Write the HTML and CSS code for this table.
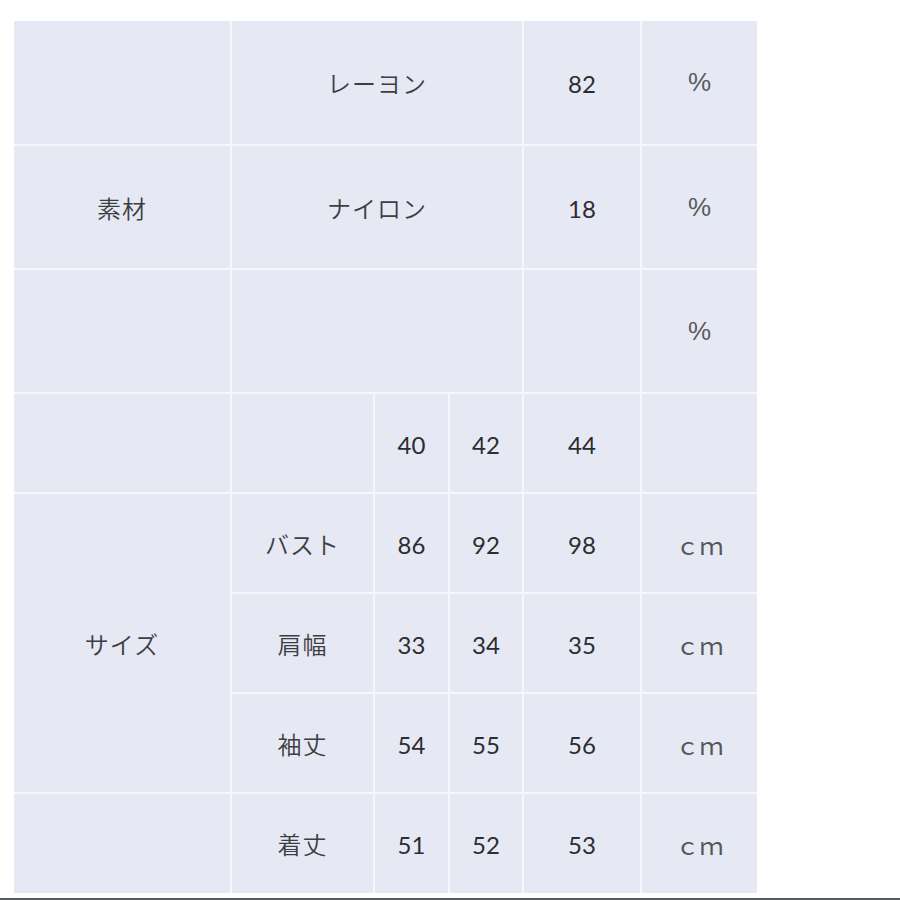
FILE: index.html
```html
<!DOCTYPE html>
<html lang="ja">
<head>
<meta charset="utf-8">
<title>素材・サイズ表</title>
<link rel="stylesheet" href="styles.css">
</head>
<body>
<div class="sheet">
  <div class="table">
    <div class="cell"></div>
    <div class="cell jp span3">レーヨン</div>
    <div class="cell num">82</div>
    <div class="cell unit">%</div>

    <div class="cell jp">素材</div>
    <div class="cell jp span3">ナイロン</div>
    <div class="cell num">18</div>
    <div class="cell unit">%</div>

    <div class="cell"></div>
    <div class="cell span3"></div>
    <div class="cell"></div>
    <div class="cell unit">%</div>

    <div class="cell"></div>
    <div class="cell"></div>
    <div class="cell num">40</div>
    <div class="cell num">42</div>
    <div class="cell num">44</div>
    <div class="cell"></div>

    <div class="cell jp rowspan3">サイズ</div>
    <div class="cell jp">バスト</div>
    <div class="cell num">86</div>
    <div class="cell num">92</div>
    <div class="cell num">98</div>
    <div class="cell jp cm">ｃｍ</div>

    <div class="cell jp">肩幅</div>
    <div class="cell num">33</div>
    <div class="cell num">34</div>
    <div class="cell num">35</div>
    <div class="cell jp cm">ｃｍ</div>

    <div class="cell jp">袖丈</div>
    <div class="cell num">54</div>
    <div class="cell num">55</div>
    <div class="cell num">56</div>
    <div class="cell jp cm">ｃｍ</div>

    <div class="cell"></div>
    <div class="cell jp">着丈</div>
    <div class="cell num">51</div>
    <div class="cell num">52</div>
    <div class="cell num">53</div>
    <div class="cell jp cm">ｃｍ</div>
  </div>
</div>
<div class="rule"></div>
</body>
</html>
```
FILE: styles.css
```css
html, body {
  margin: 0;
  padding: 0;
  background: #ffffff;
}

body {
  width: 900px;
  height: 900px;
  overflow: hidden;
}

.sheet {
  padding: 21px 0 5px 14px;
}

.table {
  display: grid;
  width: 743px;
  grid-template-columns: 216px 141px 73px 72px 116px 115px;
  grid-template-rows: 123px 122px 122px 98px 98px 98px 98px 99px;
  gap: 2px;
  background: #f6f7fb;
}

.cell {
  background: #e6e9f4;
  display: flex;
  align-items: center;
  justify-content: center;
}

.span3 {
  grid-column: span 3;
}

.rowspan3 {
  grid-row: span 3;
}

.jp {
  font-family: "Noto Sans CJK JP", "Noto Sans", sans-serif;
  font-size: 24px;
  font-weight: 350;
  color: #3e3e42;
  letter-spacing: 1px;
}

.num {
  font-family: Lato, "Liberation Sans", sans-serif;
  font-size: 24px;
  color: #2c2d31;
  padding-top: 2px;
}

.unit {
  font-family: "Liberation Sans", sans-serif;
  font-size: 26px;
  color: #5a5b5f;
}

.cm {
  font-weight: 400;
  color: #55565a;
  letter-spacing: 0;
  padding-top: 2px;
}

.rule {
  height: 2px;
  width: 900px;
  background: #58595c;
}
```
